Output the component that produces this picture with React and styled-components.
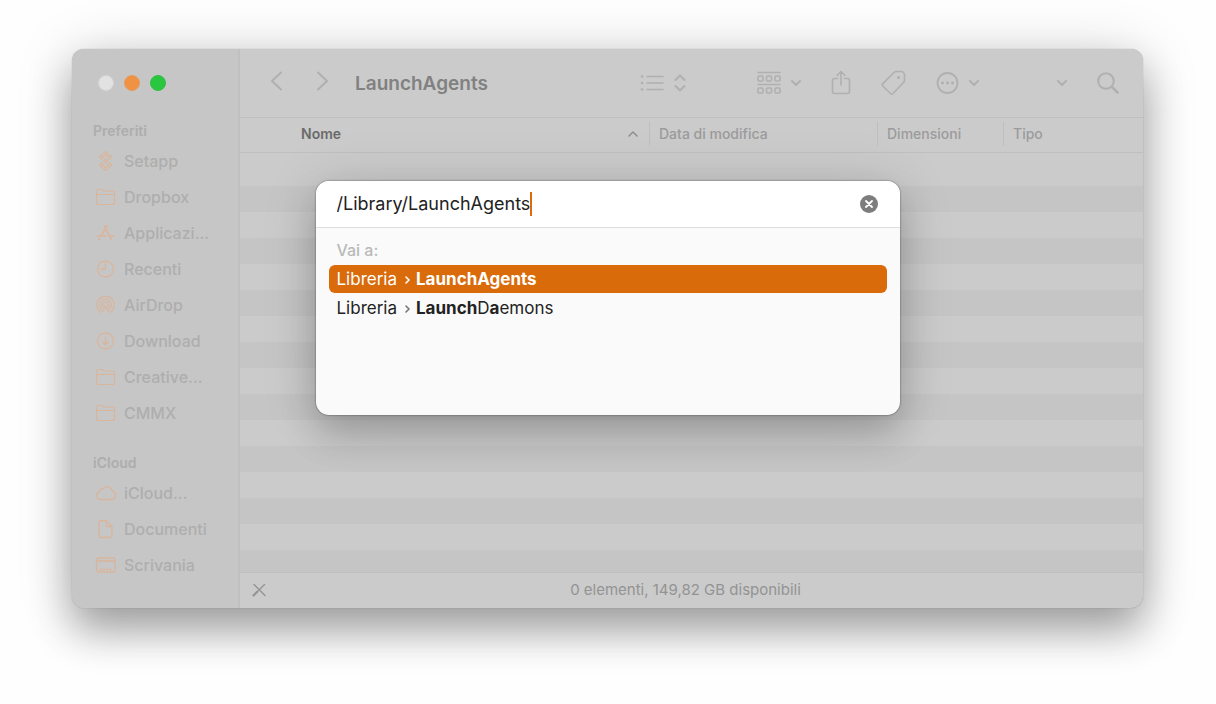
import { useState } from 'react'
import styled, { createGlobalStyle } from 'styled-components'

const GlobalStyle = createGlobalStyle`
    * {
        box-sizing: border-box;
    }
    body {
        margin: 0;
        background: #fefefe;
        font-family: Inter, "Liberation Sans", sans-serif;
    }
    button {
        font: inherit;
        color: inherit;
        background: none;
        border: 0;
        padding: 0;
    }
`;

const Desktop = styled.div`
    padding: 49px 73px 96px 72px;
    overflow: hidden;
`;

const FinderWindow = styled.div`
    position: relative;
    display: flex;
    min-height: calc(100vh - 145px);
    border-radius: 12px;
    background: #cbcbcb;
    box-shadow:
        0 0 1px rgba(0, 0, 0, 0.35),
        0 24px 40px rgba(0, 0, 0, 0.3),
        0 4px 56px rgba(0, 0, 0, 0.17);
`;

const Sidebar = styled.nav`
    width: 168px;
    flex-shrink: 0;
    padding: 26px 12px 0 21px;
    background: #c6c6c6;
    border-right: 2px solid #c0c0c0;
    border-radius: 12px 0 0 12px;
`;

const Lights = styled.div`
    display: flex;
    gap: 10px;
    padding-left: 5px;
    margin-bottom: 30px;
`;

const Light = styled.button`
    width: 16px;
    height: 16px;
    border-radius: 50%;
    border: 1px solid ${({ $edge }) => $edge};
    background: ${({ $color }) => $color};
`;

const SectionTitle = styled.h2`
    margin: 0;
    padding-top: ${({ $spaced }) => ($spaced ? '22px' : '0')};
    font-size: 14px;
    line-height: 20px;
    font-weight: 600;
    color: #adadad;
`;

const Places = styled.ul`
    list-style: none;
    margin: 0;
    padding: 2px 0 0;
`;

const Place = styled.a`
    display: flex;
    align-items: center;
    gap: 7px;
    height: 36px;
    padding-left: 2px;
    font-size: 16px;
    font-weight: 500;
    color: #aeaeae;
    text-decoration: none;
    white-space: nowrap;

    svg {
        color: #d9b59c;
        flex-shrink: 0;
    }
`;

const Main = styled.main`
    flex: 1;
    min-width: 0;
    display: flex;
    flex-direction: column;
`;

const Toolbar = styled.header`
    display: flex;
    align-items: center;
    height: 69px;
    padding: 0 24px 0 30px;
    border-bottom: 1px solid #bfbfbf;
    color: #b0b0b0;
`;

const History = styled.div`
    display: flex;
    gap: 34px;
`;

const Title = styled.h1`
    margin: 0 auto 0 27px;
    font-size: 19px;
    font-weight: 600;
    color: #818181;
`;

const Tools = styled.div`
    display: flex;
    align-items: center;
    gap: 30px;
`;

const ToolButton = styled.button`
    display: flex;
    align-items: center;
    gap: 10px;
    margin-right: ${({ $after }) => $after || 0}px;
`;

const Columns = styled.table`
    width: 100%;
    table-layout: fixed;
    border-collapse: collapse;
    border-bottom: 1px solid #bfbfbf;
`;

const Column = styled.th`
    height: 34px;
    width: ${({ $width }) => $width || 'auto'};
    padding: 0 0 2px;
    text-align: left;
`;

const SortButton = styled.button`
    display: flex;
    align-items: center;
    justify-content: space-between;
    width: 100%;
    height: 24px;
    padding: 0 11px 0 ${({ $first }) => ($first ? '61px' : '9px')};
    border-left: ${({ $first }) => ($first ? '0' : '1px solid #bfbfbf')};
    font-size: 14px;
    font-weight: ${({ $first }) => ($first ? 600 : 500)};
    color: ${({ $first }) => ($first ? '#6a6a6a' : '#9b9b9b')};

    svg {
        color: #8c8c8c;
    }
`;

const FileList = styled.div`
    flex: 1;
    margin-top: 7px;
    background: repeating-linear-gradient(#cbcbcb 0 26px, #c5c5c5 26px 52px);
`;

const StatusBar = styled.footer`
    display: grid;
    grid-template-columns: 38px 1fr 50px;
    align-items: center;
    height: 36px;
    padding-bottom: 2px;
    border-top: 1px solid #bfbfbf;
    font-size: 15px;
    color: #939393;
    text-align: center;

    button {
        display: flex;
        justify-content: center;
    }
`;

const Overlay = styled.div`
    position: absolute;
    inset: 0;
    display: flex;
    justify-content: center;
    align-items: flex-start;
    padding: 132px 16px 0;
`;

const GoTo = styled.div`
    width: 584px;
    max-width: 100%;
    min-height: 234px;
    border-radius: 13px;
    background: #fafafa;
    box-shadow:
        0 0 2px rgba(0, 0, 0, 0.6),
        0 18px 36px rgba(0, 0, 0, 0.2),
        0 4px 60px rgba(0, 0, 0, 0.12);
    overflow: hidden;
`;

const PathRow = styled.label`
    display: flex;
    align-items: center;
    height: 47px;
    padding: 0 22px 0 21px;
    background: #fff;
    border-bottom: 1px solid #dedede;
`;

const PathInput = styled.input`
    field-sizing: content;
    min-width: 0;
    padding: 0;
    border: 0;
    outline: 0;
    font-family: inherit;
    font-size: 18px;
    line-height: 28px;
    color: #222;
    background: none;
`;

const Caret = styled.span`
    width: 2px;
    height: 24px;
    flex-shrink: 0;
    background: #db6b0c;
`;

const ClearButton = styled.button`
    display: flex;
    margin-left: auto;
`;

const Hint = styled.p`
    margin: 0;
    padding: 12px 21px 0;
    font-size: 16px;
    line-height: 20px;
    font-weight: 500;
    color: #b9b9b9;
`;

const Results = styled.ul`
    display: grid;
    gap: 1px;
    list-style: none;
    margin: 0;
    padding: 5px 13px 0;
`;

const Result = styled.button`
    display: flex;
    align-items: center;
    width: 100%;
    height: 28px;
    padding: 0 8px;
    border-radius: 6px;
    font-size: 17px;
    text-align: left;
    color: ${({ $selected }) => ($selected ? '#fff' : '#222')};
    background: ${({ $selected }) => ($selected ? '#d96b0b' : 'none')};

    svg {
        margin: 2px 5px 0 8px;
        color: ${({ $selected }) => ($selected ? '#fff' : '#777')};
    }
    b {
        font-weight: 700;
    }
`;

const Icon = ({ w, h, stroke = 2, children }) => (
    <svg width={w} height={h} viewBox={`0 0 ${w} ${h}`} fill="none" stroke="currentColor"
        strokeWidth={stroke} strokeLinecap="round" strokeLinejoin="round" aria-hidden="true">
        {children}
    </svg>
)

const Down = () => <Icon w={10} h={6}><path d="M1 1l4 4 4-4" /></Icon>

const FolderIcon = () => (
    <Icon w={22} h={22} stroke={1.2}>
        <path d="M1.500 16.500v-11a2 2 0 0 1 2-2H7l2 1.500h8.500a2 2 0 0 1 2 2v9.500a2 2 0 0 1-2 2h-14a2 2 0 0 1-2-2zM1.500 8.500h18" />
    </Icon>
)

const placeIcons = {
    setapp: (
        <Icon w={22} h={22} stroke={1.3}>
            <path d="M10.500 1.500l2 2-2 2-2-2zM6.500 5l2 2-2 2-2-2zM14.500 5l2 2-2 2-2-2zM10.500 9l2 2-2 2-2-2zM6.500 13l2 2-2 2-2-2zM14.500 13l2 2-2 2-2-2zM10.500 16.500l2 2-2 2-2-2z" />
        </Icon>
    ),
    folder: <FolderIcon />,
    apps: (
        <Icon w={22} h={22} stroke={1.7}>
            <path d="M9.500 4l6.500 13M12 4L6 14M2.500 14h8.500M14.500 14H19M4 17.500l.5-1" />
        </Icon>
    ),
    clock: (
        <Icon w={22} h={22} stroke={1.3}>
            <circle cx="10.5" cy="11" r="8" />
            <path d="M10.500 5.500V11H6" />
        </Icon>
    ),
    airdrop: (
        <Icon w={22} h={22} stroke={1.2}>
            <path d="M6 18.500a8.700 8.700 0 1 1 9 0M6.800 15.500a5.800 5.800 0 1 1 7.400 0M8.200 13a3 3 0 1 1 4.600 0" />
            <path d="M10.500 11.500l-2.500 6M10.500 11.500l2.500 6" />
        </Icon>
    ),
    download: (
        <Icon w={22} h={22} stroke={1.3}>
            <circle cx="10.5" cy="11" r="8" />
            <path d="M10.500 7v7.500M7.500 11.800l3 3 3-3" />
        </Icon>
    ),
    cloud: (
        <Icon w={22} h={22} stroke={1.3}>
            <path d="M5 17.500a4 4 0 0 1-.8-7.700 3.600 3.600 0 0 1 3.800-3A5.200 5.200 0 0 1 17.300 9a4.400 4.400 0 0 1 0 8.500z" />
        </Icon>
    ),
    document: (
        <Icon w={22} h={22} stroke={1.3}>
            <path d="M11 2.500H6a2 2 0 0 0-2 2v13a2 2 0 0 0 2 2h9a2 2 0 0 0 2-2v-9zM11 2.500V7a1.500 1.500 0 0 0 1.500 1.500H17" />
        </Icon>
    ),
    desktop: (
        <Icon w={22} h={22} stroke={1.3}>
            <rect x="1.5" y="4" width="18.5" height="14" rx="2" />
            <path d="M1.500 7H20" />
            <path strokeWidth="2" strokeDasharray="2 1" strokeLinecap="butt" d="M5 15.500h12" />
        </Icon>
    ),
}

const favourites = [
    ['setapp', 'Setapp'],
    ['folder', 'Dropbox'],
    ['apps', 'Applicazi...'],
    ['clock', 'Recenti'],
    ['airdrop', 'AirDrop'],
    ['download', 'Download'],
    ['folder', 'Creative...'],
    ['folder', 'CMMX'],
]

const cloudPlaces = [
    ['cloud', 'iCloud...'],
    ['document', 'Documenti'],
    ['desktop', 'Scrivania'],
]

const PlaceList = ({ items }) => (
    <Places>
        {items.map(([icon, name]) => (
            <li key={name}><Place href="#">{placeIcons[icon]}{name}</Place></li>
        ))}
    </Places>
)

const Crumb = () => <Icon w={6} h={8} stroke={1.6}><path d="M1 1l3 3-3 3" /></Icon>

function App() {
    const [path, setPath] = useState('/Library/LaunchAgents')

    return (
        <>
            <GlobalStyle />
            <Desktop>
                <FinderWindow>
                    <Sidebar>
                        <Lights>
                            <Light $color="#e2e2e2" $edge="#d4d4d4" aria-label="Chiudi" />
                            <Light $color="#ef9244" $edge="#e99a5c" aria-label="Riduci" />
                            <Light $color="#29c740" $edge="#2fbf44" aria-label="Ingrandisci" />
                        </Lights>
                        <SectionTitle>Preferiti</SectionTitle>
                        <PlaceList items={favourites} />
                        <SectionTitle $spaced>iCloud</SectionTitle>
                        <PlaceList items={cloudPlaces} />
                    </Sidebar>
                    <Main>
                        <Toolbar>
                            <History>
                                <button aria-label="Indietro"><Icon w={12} h={20}><path d="M11 1.500L2 10l9 8.500" /></Icon></button>
                                <button aria-label="Avanti"><Icon w={12} h={20}><path d="M2 1.500L11 10l-9 8.500" /></Icon></button>
                            </History>
                            <Title>LaunchAgents</Title>
                            <Tools>
                                <ToolButton $after={40} aria-label="Vista">
                                    <Icon w={24} h={18} stroke={1.6}>
                                        <path d="M7 2.500h16M7 9h16M7 15.500h16" />
                                        <path strokeWidth="2.6" d="M2 2.500h.1M2 9h.1M2 15.500h.1" />
                                    </Icon>
                                    <Icon w={12} h={18}><path d="M1.500 6L6 1.500 10.500 6M1.500 12L6 16.500l4.500-4.500" /></Icon>
                                </ToolButton>
                                <ToolButton aria-label="Raggruppa">
                                    <Icon w={25} h={24} stroke={1.6}>
                                        <path d="M2 1.500h22M2 13.500h22" />
                                        <rect x="2" y="5" width="5" height="5" rx="1" />
                                        <rect x="10.5" y="5" width="5" height="5" rx="1" />
                                        <rect x="19" y="5" width="5" height="5" rx="1" />
                                        <rect x="2" y="17" width="5" height="5" rx="1" />
                                        <rect x="10.5" y="17" width="5" height="5" rx="1" />
                                        <rect x="19" y="17" width="5" height="5" rx="1" />
                                    </Icon>
                                    <Down />
                                </ToolButton>
                                <ToolButton aria-label="Condividi">
                                    <Icon w={20} h={28} stroke={1.6}>
                                        <path d="M6.500 9.500H3.500a2 2 0 0 0-2 2v11a2 2 0 0 0 2 2h13a2 2 0 0 0 2-2v-11a2 2 0 0 0-2-2h-3M10 16V2.500M6 6.500l4-4 4 4" />
                                    </Icon>
                                </ToolButton>
                                <ToolButton aria-label="Tag">
                                    <Icon w={25} h={26} stroke={1.6}>
                                        <path d="M1.800 13.600L13 2.500q1-1 2.500-1H20a3.500 3.500 0 0 1 3.500 3.500v5q0 1.500-1 2.500L12 23.500q-1.200 1.200-2.500 0l-7.700-7.500q-1.200-1.200 0-2.400z" />
                                        <circle cx="17.500" cy="7.500" r=".8" />
                                    </Icon>
                                </ToolButton>
                                <ToolButton $after={48} aria-label="Azioni">
                                    <Icon w={23} h={24} stroke={1.8}>
                                        <circle cx="11.500" cy="12" r="10" />
                                        <path strokeWidth="2.800" d="M6.500 12h.1M11.500 12h.1M16.500 12h.1" />
                                    </Icon>
                                    <Down />
                                </ToolButton>
                                <ToolButton aria-label="Altro"><Down /></ToolButton>
                                <ToolButton aria-label="Cerca">
                                    <Icon w={22} h={22}>
                                        <circle cx="9" cy="9" r="7.800" />
                                        <path strokeWidth="2.600" d="M15 15l5.500 5.500" />
                                    </Icon>
                                </ToolButton>
                            </Tools>
                        </Toolbar>
                        <Columns>
                            <thead>
                                <tr>
                                    <Column>
                                        <SortButton $first>Nome<Icon w={10} h={6} stroke={1.4}><path d="M1 5l4-4 4 4" /></Icon></SortButton>
                                    </Column>
                                    <Column $width="228px"><SortButton>Data di modifica</SortButton></Column>
                                    <Column $width="126px"><SortButton>Dimensioni</SortButton></Column>
                                    <Column $width="140px"><SortButton>Tipo</SortButton></Column>
                                </tr>
                            </thead>
                        </Columns>
                        <FileList />
                        <StatusBar>
                            <button aria-label="Solo lettura">
                                <Icon w={14} h={14} stroke={1.3}>
                                    <path d="M2 1.500l11 11M12.500 1.500L4.500 9.500" />
                                    <path strokeWidth="2.200" d="M5 9l-3.500 3.500" />
                                </Icon>
                            </button>
                            <span>0 elementi, 149,82 GB disponibili</span>
                        </StatusBar>
                    </Main>
                    <Overlay>
                        <GoTo role="dialog" aria-label="Vai alla cartella">
                            <PathRow>
                                <PathInput aria-label="Percorso" value={path} onChange={(e) => setPath(e.target.value)} />
                                <Caret />
                                <ClearButton aria-label="Cancella" onClick={() => setPath('')}>
                                    <Icon w={18} h={18} stroke={1.8}>
                                        <circle cx="9" cy="9" r="9" fill="#7d7d7d" stroke="none" />
                                        <path stroke="#fff" d="M6 6l6 6M12 6l-6 6" />
                                    </Icon>
                                </ClearButton>
                            </PathRow>
                            <Hint>Vai a:</Hint>
                            <Results>
                                <li><Result $selected>Libreria<Crumb /><b>LaunchAgents</b></Result></li>
                                <li><Result>Libreria<Crumb /><b>Launch</b>D<b>a</b>emons</Result></li>
                            </Results>
                        </GoTo>
                    </Overlay>
                </FinderWindow>
            </Desktop>
        </>
    )
}

export default App
